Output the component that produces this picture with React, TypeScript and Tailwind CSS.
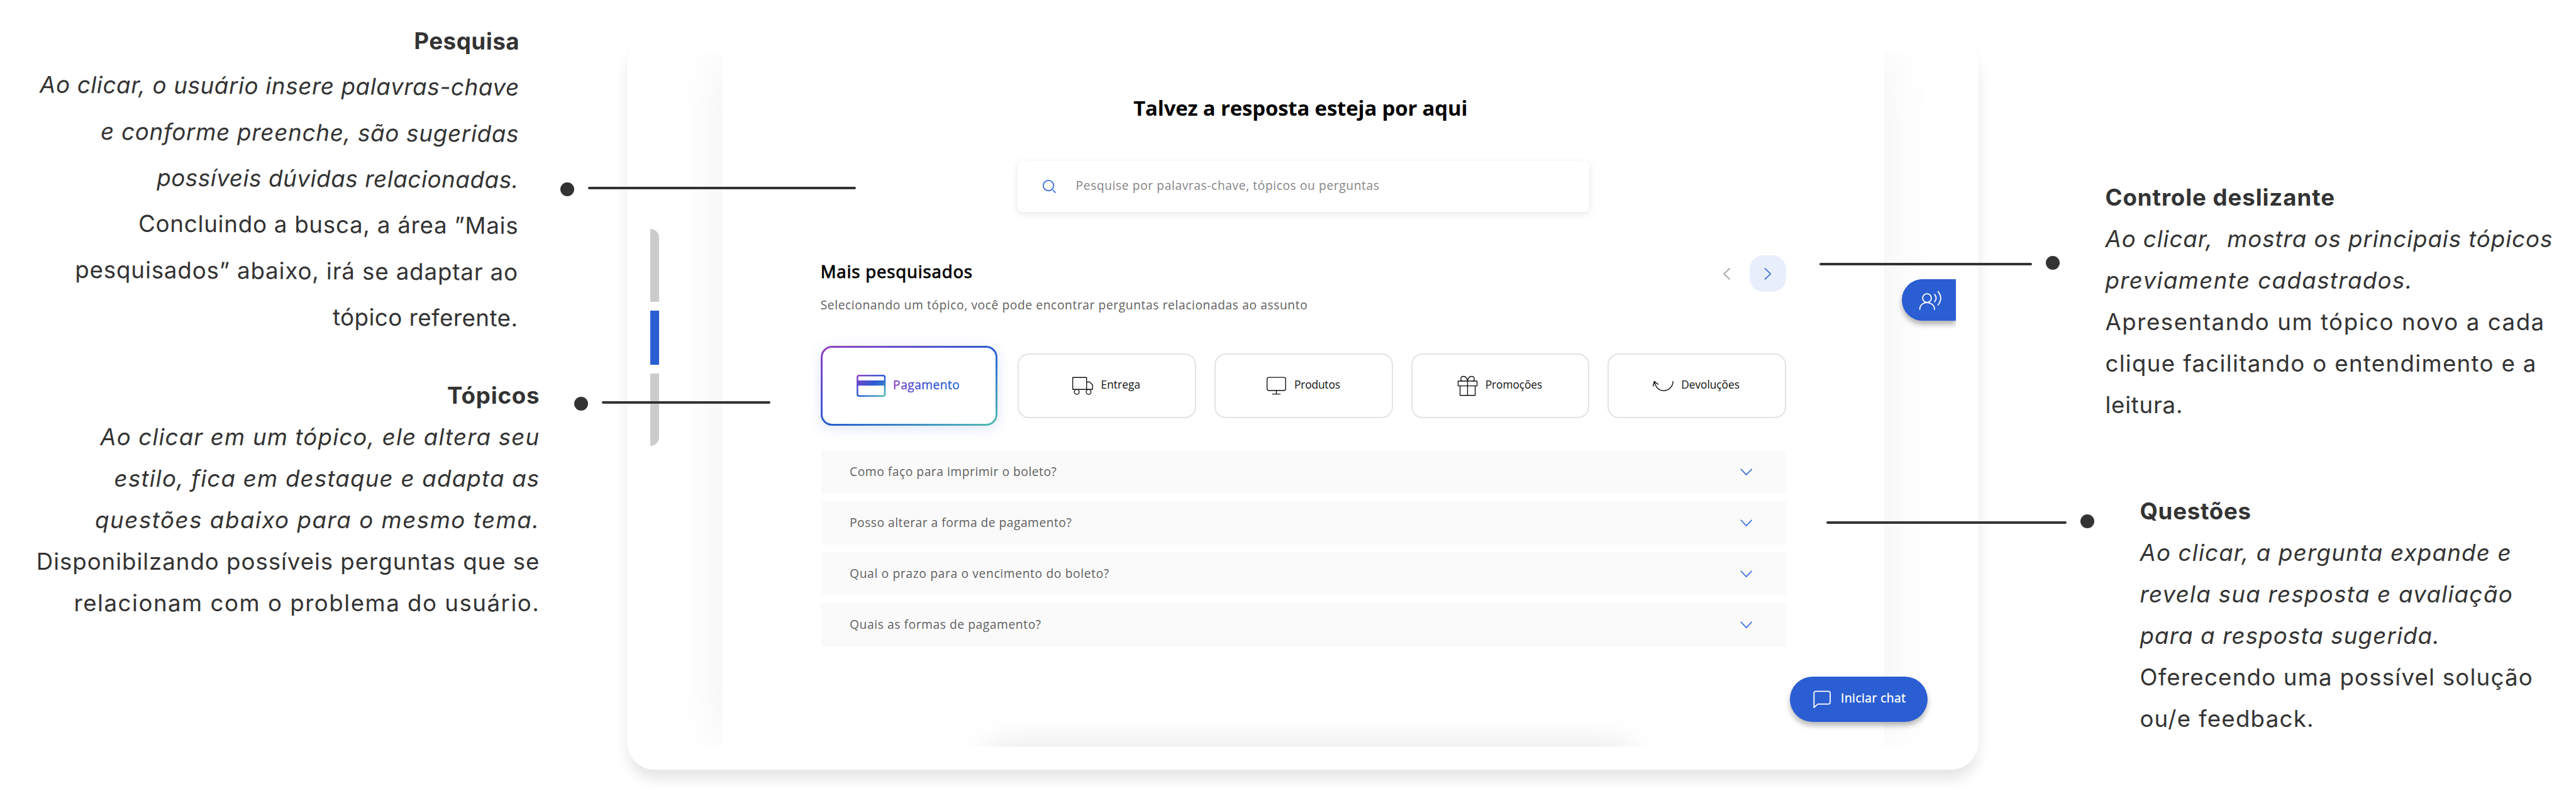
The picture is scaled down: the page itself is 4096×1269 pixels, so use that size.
import type { ReactNode } from "react";

function Chevron({ className }: { className: string }) {
  return (
    <svg viewBox="0 0 21 12" fill="none" stroke="currentColor" strokeWidth="1.8" className={className}>
      <path d="M.8.8 10.5 11 20.2.8" />
    </svg>
  );
}

function LineIcon({ children }: { children: ReactNode }) {
  return (
    <svg
      viewBox="0 0 36 36"
      fill="none"
      stroke="currentColor"
      strokeWidth="1.5"
      strokeLinecap="round"
      strokeLinejoin="round"
      className="h-[33px] w-[33px] shrink-0"
    >
      {children}
    </svg>
  );
}

const topics = [
  {
    label: "Entrega",
    tracking: "tracking-[0.001em]",
    icon: (
      <LineIcon>
        <path d="M.8 3.5h24v20.8H.8zM24.8 11.5H30l5.2 4.8v8H24.8" />
        <circle cx="7.8" cy="28.6" r="4.2" />
        <circle cx="28.3" cy="28.6" r="4.2" />
      </LineIcon>
    ),
  },
  {
    label: "Produtos",
    tracking: "tracking-[-0.01em]",
    icon: (
      <LineIcon>
        <rect x="1.9" y="3.4" width="32.2" height="22.8" rx="3" />
        <path d="M18 26.2v6M11.3 32.3h13.4" />
      </LineIcon>
    ),
  },
  {
    label: "Promoções",
    tracking: "tracking-[-0.006em]",
    icon: (
      <LineIcon>
        <path d="M1.6 9.8h32.8v8.3H1.6zM5 18.1h26.2v16.5H5zM18 9.8v24.8" />
        <path d="M18 9.5C17.2 4.5 14.5 1.6 11 1.6 8 1.6 6.4 3.8 6.4 6c0 2 1 3.6 1.8 3.8M18 9.5c.8-5 3.5-7.9 7-7.9 3 0 4.6 2.2 4.6 4.4 0 2-1 3.6-1.8 3.8" />
      </LineIcon>
    ),
  },
  {
    label: "Devoluções",
    tracking: "tracking-[-0.004em]",
    icon: (
      <LineIcon>
        <path d="M35.2 10.3C34.9 19.5 27.6 26.5 19 26.5 11 26.5 4.5 20.5 2.8 10.6M.6 18.6l2-8.2 6.6 5" />
      </LineIcon>
    ),
  },
];

const questions = [
  { text: "Como faço para imprimir o boleto?", tracking: "tracking-[0.027em]" },
  { text: "Posso alterar a forma de pagamento?", tracking: "tracking-[0.025em]" },
  { text: "Qual o prazo para o vencimento do boleto?", tracking: "tracking-[0.033em]" },
  { text: "Quais as formas de pagamento?", tracking: "tracking-[0.029em]" },
];

function PaymentTopic() {
  return (
    <div className="h-[127.4px] w-[281.5px] rounded-[18px] bg-[linear-gradient(to_bottom_right,#9440bf,#2a5ad5_50%,#54bdb3)] p-[3px] shadow-[0_4px_20px_rgba(42,94,220,0.16)]">
      <div className="flex h-full items-center justify-center gap-[11.4px] rounded-[15px] bg-white pr-[2px]">
        <svg viewBox="0 0 50.5 38.3" className="h-[35px] w-[46.3px]">
          <defs>
            <linearGradient id="pay" x1="0" y1="0" x2="1" y2="1">
              <stop offset="0" stopColor="#9440bf" />
              <stop offset="0.5" stopColor="#2a5ad5" />
              <stop offset="1" stopColor="#54bdb3" />
            </linearGradient>
          </defs>
          <path
            fill="url(#pay)"
            fillRule="evenodd"
            d="M4.5 0H46a4.5 4.5 0 0 1 4.5 4.5v29.3a4.5 4.5 0 0 1-4.5 4.5H4.5A4.5 4.5 0 0 1 0 33.8V4.5A4.5 4.5 0 0 1 4.5 0ZM4.5 2.8A1.7 1.7 0 0 0 2.8 4.5V9.9H47.7V4.5A1.7 1.7 0 0 0 46 2.8ZM2.8 18.8V33.8A1.7 1.7 0 0 0 4.5 35.5H46A1.7 1.7 0 0 0 47.7 33.8V18.8Z"
          />
        </svg>
        <span className="mb-[3px] bg-[linear-gradient(to_right,#8a44c4,#3d55d3_45%,#2a66d8)] bg-clip-text text-[19.25px] tracking-[0.023em] text-transparent [-webkit-text-stroke:0.45px_transparent]">
          Pagamento
        </span>
      </div>
    </div>
  );
}

function HelpPage() {
  return (
    <main className="flex h-full w-[1847.2px] shrink-0 flex-col bg-white px-[156px] pt-[65.8px] font-['Open_Sans',sans-serif] shadow-[0_0_84px_rgba(0,0,0,0.06)]">
      <h1 className="pr-[9px] text-center text-[33px] leading-[44px] font-bold tracking-[-0.006em] text-black">
        Talvez a resposta esteja por aqui
      </h1>

      <div className="mx-auto mt-[61.6px] flex h-[80.7px] w-[908.5px] items-center gap-[31.6px] rounded-lg bg-white pl-[40px] shadow-[0_3px_12px_rgba(0,0,0,0.1)]">
        <svg viewBox="0 0 23 23" fill="none" stroke="#2f66dd" strokeWidth="1.8" className="h-[21px] w-[21px]">
          <circle cx="10" cy="10" r="9" />
          <path d="m17.5 17.5 5 5" />
        </svg>
        <span className="mb-px text-[19.25px] tracking-[0.03em] text-[#858585]">
          Pesquise por palavras-chave, tópicos ou perguntas
        </span>
      </div>

      <div className="mt-[69.4px] flex h-[93.3px] items-start justify-between">
        <div className="pt-[8.2px]">
          <h2 className="text-[27.5px] leading-[36px] tracking-[0.032em] text-black [-webkit-text-stroke:0.9px_black]">
            Mais pesquisados
          </h2>
          <p className="mt-[21px] text-[19.25px] leading-[28px] tracking-[0.03em] text-[#5f5f5f]">
            Selecionando um tópico, você pode encontrar perguntas relacionadas ao assunto
          </p>
        </div>
        <div className="flex items-center gap-[26px]">
          <Chevron className="h-[11px] w-[19.5px] rotate-90 text-[#999]" />
          <div className="flex h-[58px] w-[58px] items-center justify-center rounded-[22px] bg-[#e8eefb]">
            <Chevron className="h-[11px] w-[19.5px] -rotate-90 text-[#2f66dd]" />
          </div>
        </div>
      </div>

      <div className="mt-[50.4px] flex items-center justify-between">
        <PaymentTopic />
        <div className="flex gap-[28.9px]">
          {topics.map((t) => (
            <div
              key={t.label}
              className="flex h-[103.6px] w-[283.7px] items-center justify-center gap-[12px] rounded-[18px] border-2 border-[#e3e3e3] bg-white pr-[2px] text-[#111]"
            >
              {t.icon}
              <span className={`mb-[4px] text-[17.4px] ${t.tracking}`}>{t.label}</span>
            </div>
          ))}
        </div>
      </div>

      <div className="mt-[39px] flex flex-col gap-[12.2px]">
        {questions.map((q) => (
          <div key={q.text} className="flex h-[68.8px] items-center justify-between bg-[#fafafa] pr-[53.6px] pl-[46.4px]">
            <span className={`mb-px text-[19.25px] text-[#5f5f5f] ${q.tracking}`}>{q.text}</span>
            <Chevron className="h-[11px] w-[19.5px] text-[#2f66dd]" />
          </div>
        ))}
      </div>
    </main>
  );
}

function Device() {
  return (
    <section className="mt-[60px] h-[1164px] w-[2149px] shrink-0 rounded-[44px] bg-white px-[36.7px] pt-[24.7px] pb-[36.7px] shadow-[0_16px_22px_-2px_rgba(0,0,0,0.11)]">
      <div className="relative flex h-full overflow-hidden">
        <div className="relative z-10 flex w-[114.6px] shrink-0 flex-col gap-[14px] pt-[279.6px]">
          <div className="h-[115.5px] w-[14px] rounded-tr-[14px] bg-[#cbcbcb]" />
          <div className="h-[86.2px] w-[14px] bg-[#2a5ed2]" />
          <div className="h-[115.5px] w-[14px] rounded-br-[14px] bg-[#cbcbcb]" />
        </div>
        <HelpPage />

        <div className="absolute top-full left-[530px] h-[60px] w-[1035px] rounded-[30px] shadow-[0_0_56px_rgba(0,0,0,0.11)]" />

        <button className="absolute top-[359.4px] right-0 flex h-[66.3px] w-[85.3px] items-center rounded-l-full bg-[#2a5ed2] pl-[27px] text-white shadow-[0_6px_8px_rgba(0,0,0,0.3)]">
          <svg
            viewBox="0 0 40 34"
            fill="none"
            stroke="currentColor"
            strokeWidth="2"
            strokeLinecap="round"
            className="h-[31px] w-[36.5px]"
          >
            <circle cx="14.3" cy="13.2" r="7.6" />
            <path d="M1.7 32.8C1.7 25 8 21 14.3 21s13.1 4 13.1 11.8M27.5 6.8q5.5 6.4 0 12.8M33.5 1.8q9.5 11.7 0 23.4" />
          </svg>
        </button>

        <button className="absolute right-[45px] bottom-[39px] flex h-[72.4px] w-[219px] items-center gap-[15.5px] rounded-full bg-[#2a5ed2] pl-[37.4px] font-['Open_Sans',sans-serif] text-white shadow-[0_6px_8px_rgba(0,0,0,0.28)]">
          <svg viewBox="0 0 31 31" fill="none" stroke="currentColor" strokeWidth="2" strokeLinejoin="round" className="h-[28.5px] w-[28.5px]">
            <path d="M1.5 29.5v-25a3 3 0 0 1 3-3h22a3 3 0 0 1 3 3v16a3 3 0 0 1-3 3H8z" />
          </svg>
          <span className="mb-[3px] text-[19.25px] tracking-[0.022em] [-webkit-text-stroke:0.4px_white]">Iniciar chat</span>
        </button>
      </div>
    </section>
  );
}

/* Lines and dots that tie each note to the part of the screen it describes. */
function Connectors() {
  return (
    <>
      <i className="absolute top-[290px] left-[891px] z-20 h-[22px] w-[22px] rounded-full bg-[#333]" />
      <i className="absolute top-[297px] left-[935px] z-20 h-[4px] w-[426px] rounded-full bg-[#333]" />
      <i className="absolute top-[631px] left-[913px] z-20 h-[22px] w-[22px] rounded-full bg-[#333]" />
      <i className="absolute top-[638px] left-[957px] z-20 h-[4px] w-[268px] rounded-full bg-[#333]" />
      <i className="absolute top-[418px] left-[2893px] z-20 h-[4px] w-[338px] rounded-full bg-[#333]" />
      <i className="absolute top-[407px] left-[3253px] z-20 h-[22px] w-[22px] rounded-full bg-[#333]" />
      <i className="absolute top-[829px] left-[2904px] z-20 h-[4px] w-[382px] rounded-full bg-[#333]" />
      <i className="absolute top-[818px] left-[3308px] z-20 h-[22px] w-[22px] rounded-full bg-[#333]" />
    </>
  );
}

export default function App() {
  return (
    <div className="relative flex h-[1269px] w-[4096px] overflow-hidden bg-white font-['Inter',sans-serif] text-[36.67px] whitespace-pre text-[#333]">
      <aside className="flex w-[997.4px] shrink-0 flex-col gap-[52.3px] pt-[29.8px] text-right">
        <div className="origin-top-right rotate-[0.34deg] pr-[171px] leading-[73.34px]">
          <h3 className="font-bold tracking-[0.015em]">Pesquisa</h3>
          <p className="tracking-[0.018em] italic">Ao clicar, o usuário insere palavras-chave</p>
          <p className="tracking-[0.021em] italic">e conforme preenche, são sugeridas</p>
          <p className="tracking-[0.017em] italic">possíveis dúvidas relacionadas.</p>
          <p className="tracking-[0.021em]">Concluindo a busca, a área ”Mais</p>
          <p className="tracking-[0.024em]">pesquisados” abaixo, irá se adaptar ao</p>
          <p className="tracking-[0.013em]">tópico referente.</p>
        </div>
        <div className="pr-[139px] leading-[66px]">
          <h3 className="font-bold tracking-[0.022em]">Tópicos</h3>
          <p className="tracking-[0.032em] italic">Ao clicar em um tópico, ele altera seu</p>
          <p className="tracking-[0.033em] italic">estilo, fica em destaque e adapta as</p>
          <p className="tracking-[0.042em] italic">questões abaixo para o mesmo tema.</p>
          <p className="tracking-[0.026em]">Disponibilzando possíveis perguntas que se</p>
          <p className="tracking-[0.041em]">relacionam com o problema do usuário.</p>
        </div>
      </aside>

      <Device />

      <aside className="flex flex-1 flex-col gap-[103.7px] pt-[280.6px] leading-[66px]">
        <div className="pl-[201px]">
          <h3 className="font-bold tracking-[0.025em]">Controle deslizante</h3>
          <p className="tracking-[0.026em] italic">{"Ao clicar,\u00a0 mostra os principais tópicos"}</p>
          <p className="tracking-[0.038em] italic">previamente cadastrados.</p>
          <p className="tracking-[0.042em]">Apresentando um tópico novo a cada</p>
          <p className="tracking-[0.036em]">clique facilitando o entendimento e a</p>
          <p className="tracking-[0.021em]">leitura.</p>
        </div>
        <div className="pl-[256px]">
          <h3 className="font-bold tracking-[0.02em]">Questões</h3>
          <p className="tracking-[0.033em] italic">Ao clicar, a pergunta expande e</p>
          <p className="tracking-[0.035em] italic">revela sua resposta e avaliação</p>
          <p className="tracking-[0.031em] italic">para a resposta sugerida.</p>
          <p className="tracking-[0.033em]">Oferecendo uma possível solução</p>
          <p className="tracking-[0.034em]">ou/e feedback.</p>
        </div>
      </aside>

      <Connectors />
    </div>
  );
}
